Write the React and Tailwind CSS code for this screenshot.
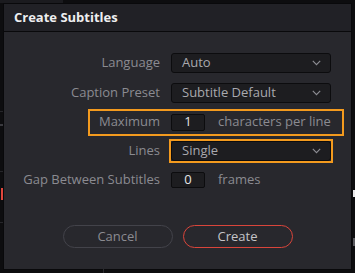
import React from 'react';

const Chevron = () => (
  <svg width="9" height="6" viewBox="0 0 9 6" fill="none" className="text-[#8e8e94]">
    <path d="M0.8 0.8 L4.5 4.6 L8.2 0.8" stroke="currentColor" strokeWidth="1.1" />
  </svg>
);

const Dropdown = ({ value }) => (
  <div className="w-[160px] h-[20px] flex items-center justify-between pl-[10px] pr-[9px] bg-[#1d1d20] border border-[#0c0c0e] rounded-[3px] text-[13px] text-[#a9a9ae]">
    <span>{value}</span>
    <Chevron />
  </div>
);

const NumberBox = ({ value, h = 'h-[17px]' }) => (
  <div className={`w-[34px] ${h} flex items-center justify-center bg-[#1d1d20] border border-[#0c0c0e] rounded-[2px] text-[13px] text-[#e4e4e6]`}>
    {value}
  </div>
);

const Row = ({ label, h, children }) => (
  <div className={`relative flex items-center ${h}`}>
    <div className="w-[156px] text-right text-[13px] text-[#8b8b91] whitespace-nowrap">{label}</div>
    <div className="ml-[11px] flex items-center">{children}</div>
  </div>
);

export default function App() {
  return (
    <div className="relative w-[355px] h-[273px] bg-[#0d0d0f] pt-[3px] pl-[3px] overflow-hidden" style={{ fontFamily: '"Open Sans", "Noto Sans", sans-serif' }}>
      {/* bits of the page behind the dialog */}
      <div className="absolute left-0 top-0 w-[63px] h-[3px] bg-[#1b1b1f]"></div>
      <div className="absolute left-0 top-[111px] w-[3px] h-px bg-[#26262a]"></div>
      <div className="absolute left-0 top-[124px] w-[3px] h-[2px] bg-[#3a3a3f]"></div>
      <div className="absolute left-0 top-[171px] w-[3px] h-px bg-[#26262a]"></div>
      <div className="absolute left-[1px] top-[188px] w-[2px] h-[12px] bg-[#e0463c]"></div>
      <div className="absolute left-0 top-[222px] w-[3px] h-px bg-[#26262a]"></div>
      <div className="absolute right-0 top-[190px] w-[2px] h-[7px] bg-[#e8e8ea]"></div>
      <div className="absolute right-0 top-[238px] w-[2px] h-[8px] bg-[#5a5a5f]"></div>
      <div className="absolute left-[103px] bottom-0 w-px h-[4px] bg-[#2a2a2e]"></div>

      <div className="w-[349px] h-[267px] flex flex-col bg-[#28282d] border border-[#09090b]">
        <div className="h-[28px] flex items-center pl-[10px] bg-[#212126] border-b border-[#09090b]">
          <span className="text-[13px] font-bold text-[#eeeef0]">Create Subtitles</span>
        </div>

        <div className="flex flex-col pt-[16px]">
          <Row label="Language" h="h-[30px]">
            <Dropdown value="Auto" />
          </Row>
          <Row label="Caption Preset" h="h-[30px]">
            <Dropdown value="Subtitle Default" />
          </Row>
          <Row label="Maximum" h="h-[28px]">
            <NumberBox value="1" />
            <span className="ml-[13px] text-[13px] text-[#8b8b91] whitespace-nowrap">characters per line</span>
            <div className="absolute left-[84px] top-[1px] w-[256px] h-[27px] border-2 border-[#f39a1e]"></div>
          </Row>
          <Row label="Lines" h="h-[30px]">
            <Dropdown value="Single" />
            <div className="absolute left-[165px] top-[3px] w-[164px] h-[24px] border-2 border-[#f39a1e]"></div>
          </Row>
          <Row label="Gap Between Subtitles" h="h-[28px]">
            <NumberBox value="0" h="h-[16px]" />
            <span className="ml-[13px] text-[13px] text-[#8b8b91]">frames</span>
          </Row>
        </div>

        <div className="flex justify-center gap-[10px] mt-[31px]">
          <button className="w-[110px] h-[23px] rounded-full border border-[#43434a] text-[13px] text-[#8b8b91]">Cancel</button>
          <button className="w-[110px] h-[23px] rounded-full border border-[#d9453b] text-[13px] text-[#c4c4c8]">Create</button>
        </div>
      </div>
    </div>
  );
}
